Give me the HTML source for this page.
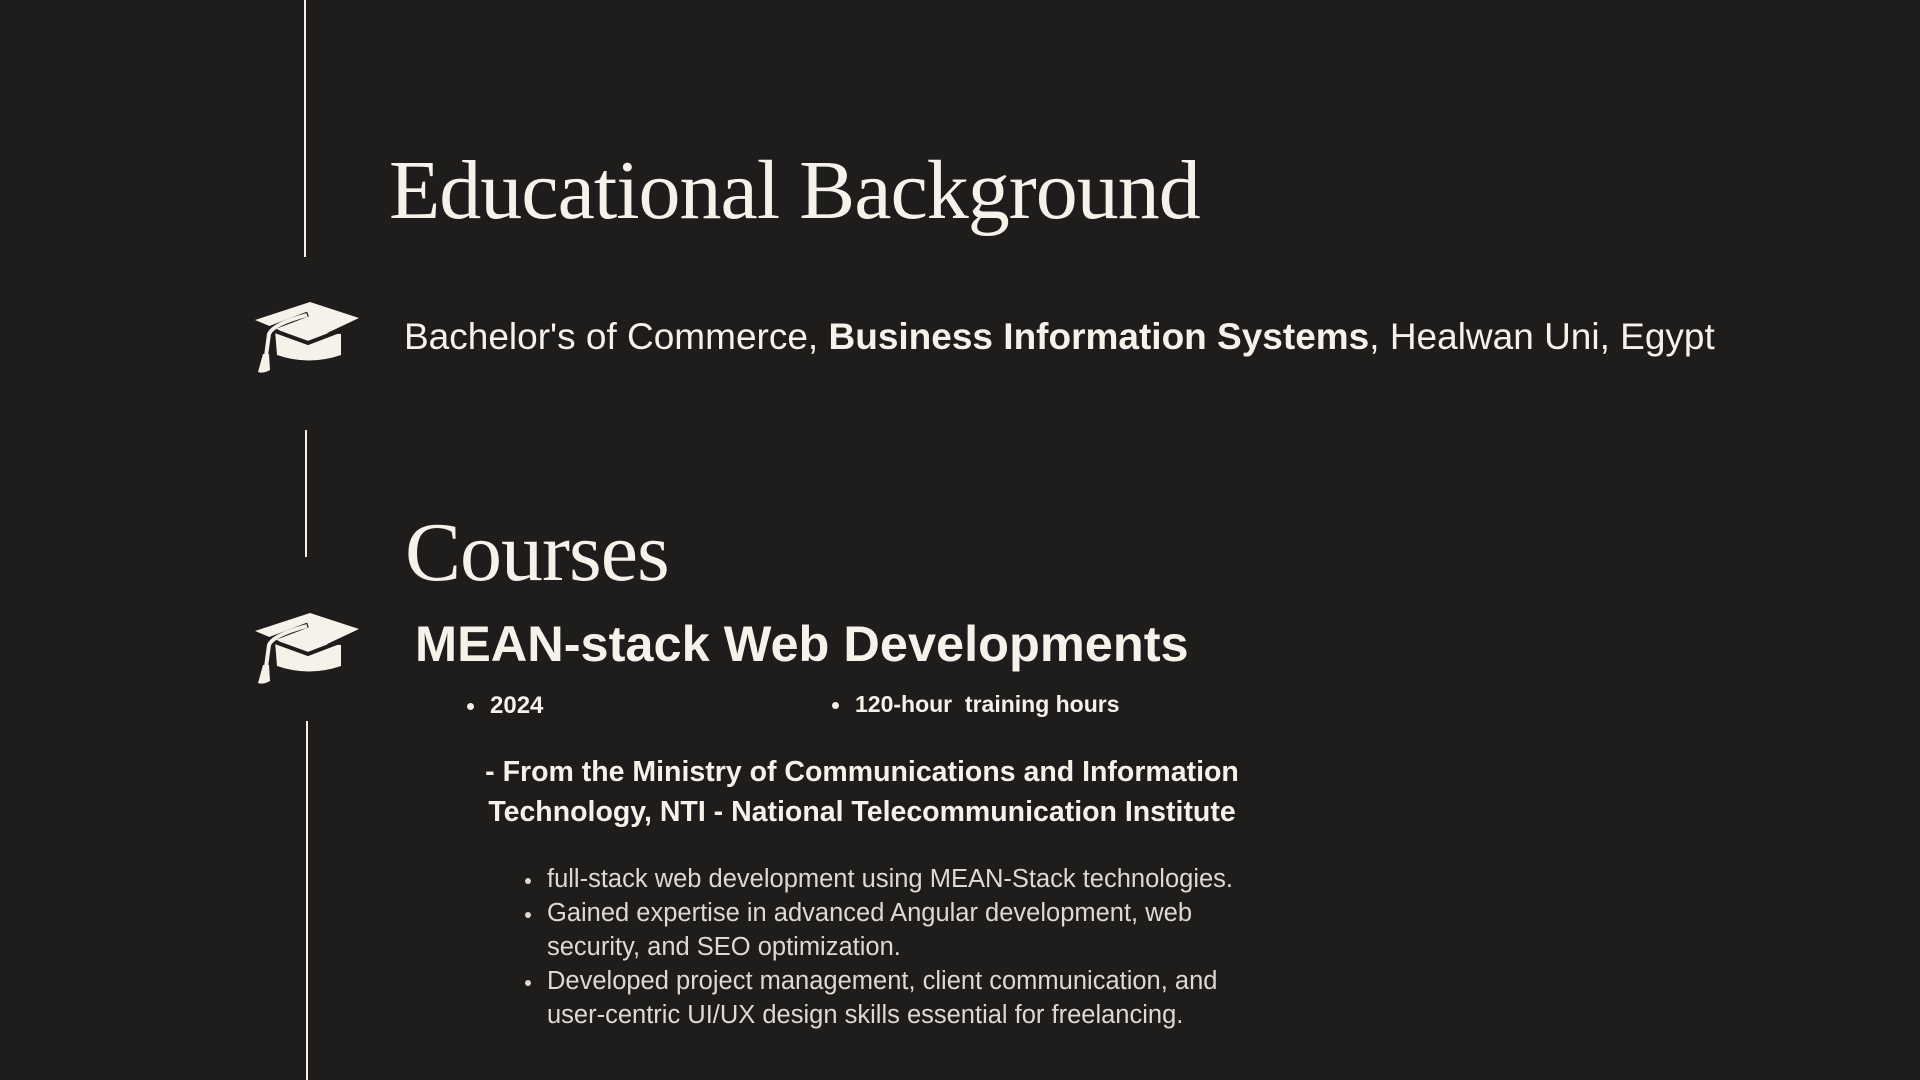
<!DOCTYPE html>
<html><head><meta charset="utf-8"><style>
html,body{margin:0;padding:0}
body{width:1920px;height:1080px;background:#1e1d1c;position:relative;overflow:hidden;color:#f6f2ea;font-family:"Liberation Sans",sans-serif}
.a{position:absolute;white-space:nowrap;line-height:1}
.vl{position:absolute;width:2px;background:#f3efe6}
.serif{font-family:"Liberation Serif",serif;letter-spacing:-1px}
.dot{position:absolute;width:7px;height:7px;border-radius:50%;background:#f6f2ea}
</style></head><body>
<div class="vl" style="left:304px;top:0;height:257px"></div>
<div class="vl" style="left:305px;top:430px;height:127px"></div>
<div class="vl" style="left:306px;top:721px;height:359px"></div>

<div class="a serif" style="left:389px;top:149px;font-size:84px">Educational Background</div>

<svg class="a" style="left:255px;top:300px" width="104" height="74" viewBox="0 0 104 74">
<path d="M20 30 L22 55 Q54 66 86 55 L86 34 Z" fill="#f6f2ea"/>
<path d="M0 20 L55 2 L104 18 L53 42 Z" fill="#f6f2ea"/>
<path d="M20 31 L53 43 L87 30" stroke="#1e1d1c" stroke-width="4" fill="none"/>
<path d="M53 14 L16 28 L13 56" stroke="#1e1d1c" stroke-width="5" fill="none"/>
<path d="M52 15 Q18 24 14 34 L11 56" stroke="#f6f2ea" stroke-width="4" fill="none"/>
<path d="M8 54 L14 54 L15 70 Q8 74 3 72 Z" fill="#f6f2ea"/>
</svg>

<div class="a" style="left:404px;top:318px;font-size:37px">Bachelor's of Commerce, <b>Business Information Systems</b>, Healwan Uni, Egypt</div>

<div class="a serif" style="left:405px;top:511px;font-size:84px">Courses</div>

<svg class="a" style="left:255px;top:611px" width="104" height="74" viewBox="0 0 104 74">
<path d="M20 30 L22 55 Q54 66 86 55 L86 34 Z" fill="#f6f2ea"/>
<path d="M0 20 L55 2 L104 18 L53 42 Z" fill="#f6f2ea"/>
<path d="M20 31 L53 43 L87 30" stroke="#1e1d1c" stroke-width="4" fill="none"/>
<path d="M53 14 L16 28 L13 56" stroke="#1e1d1c" stroke-width="5" fill="none"/>
<path d="M52 15 Q18 24 14 34 L11 56" stroke="#f6f2ea" stroke-width="4" fill="none"/>
<path d="M8 54 L14 54 L15 70 Q8 74 3 72 Z" fill="#f6f2ea"/>
</svg>

<div class="a" style="left:415px;top:619px;font-size:50.5px;font-weight:bold">MEAN-stack Web Developments</div>

<div class="dot" style="left:467px;top:703px"></div>
<div class="a" style="left:490px;top:694px;font-size:24px;font-weight:bold">2024</div>
<div class="dot" style="left:832px;top:702px"></div>
<div class="a" style="left:855px;top:693px;font-size:23px;font-weight:bold">120-hour&nbsp; training hours</div>

<div class="a" style="left:474px;top:758px;width:776px;text-align:center;font-size:28.5px;font-weight:bold">- From the Ministry of Communications and Information</div>
<div class="a" style="left:474px;top:798px;width:776px;text-align:center;font-size:28.5px;font-weight:bold">Technology, NTI - National Telecommunication Institute</div>

<div style="color:#dedad2;font-size:25.5px">
<div class="dot" style="left:525px;top:878px;width:6px;height:6px;background:#dedad2"></div>
<div class="a" style="left:547px;top:867px">full-stack web development using MEAN-Stack technologies.</div>
<div class="dot" style="left:525px;top:912px;width:6px;height:6px;background:#dedad2"></div>
<div class="a" style="left:547px;top:901px">Gained expertise in advanced Angular development, web</div>
<div class="a" style="left:547px;top:935px">security, and SEO optimization.</div>
<div class="dot" style="left:525px;top:980px;width:6px;height:6px;background:#dedad2"></div>
<div class="a" style="left:547px;top:969px">Developed project management, client communication, and</div>
<div class="a" style="left:547px;top:1003px">user-centric UI/UX design skills essential for freelancing.</div>
</div>
</body></html>
